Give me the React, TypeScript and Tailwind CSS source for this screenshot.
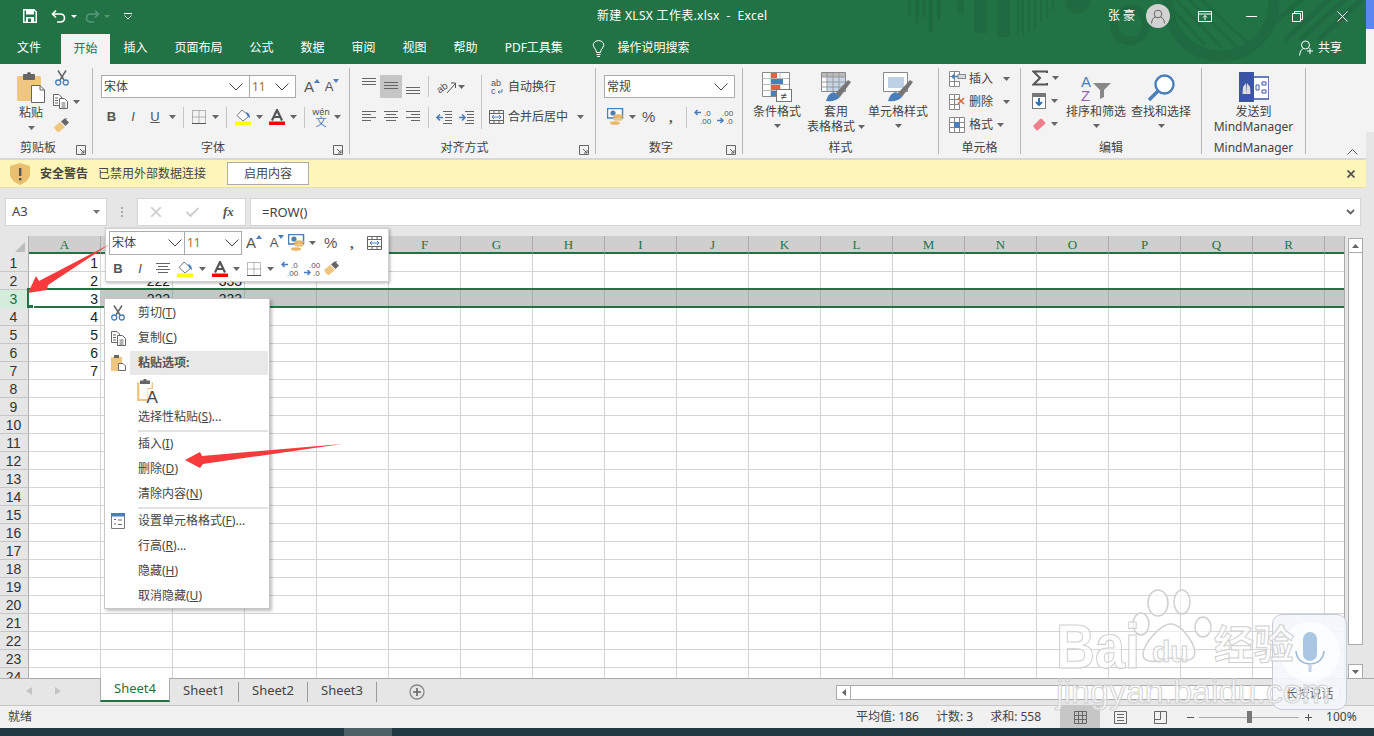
import React from "react";

type P = { children?: React.ReactNode; className?: string };
const S = ({ w, h, children, className }: { w: number; h: number } & P) => (
  <svg width={w} height={h} viewBox={`0 0 ${w} ${h}`} className={"shrink-0 " + (className ?? "")}>{children}</svg>
);

const Caret = ({ className }: P) => (
  <S w={7} h={4} className={className}><polygon points="0,0 7,0 3.5,4" fill="#666" /></S>
);
const Chevron = () => (
  <S w={14} h={8}><polyline points="0.5,0.5 7,7 13.5,0.5" fill="none" stroke="#444" strokeWidth="1" /></S>
);
const Launcher = () => (
  <S w={10} h={10}><path d="M.5.5H9.5V9.5H.5Z M4 4L8 8 M8 5V8H5" fill="none" stroke="#666" strokeWidth="1" /></S>
);
const Lines = ({ ys, x1, x2 }: { ys: number[]; x1: number[]; x2: number[] }) => (
  <>{ys.map((y, i) => <line key={i} x1={x1[i]} x2={x2[i]} y1={y + .5} y2={y + .5} stroke="#666" />)}</>
);

const PasteBig = () => (
  <S w={28} h={31}>
    <rect x="0" y="4" width="24" height="25" rx="1.5" fill="#efc67f" />
    <rect x="6" y="2" width="12" height="6" rx="1" fill="#666" /><rect x="10" y="0" width="4" height="4" rx="2" fill="#666" />
    <path d="M14.5 13.5H23L27.5 18V30.5H14.5Z" fill="#fff" stroke="#666" />
    <path d="M23 13.5V18H27.5" fill="none" stroke="#666" />
  </S>
);
const Scissors = () => (
  <svg width={14} height={16} viewBox="0 0 14 16" className="shrink-0">
    <path d="M3 .5L9 10 M11 .5L5 10" stroke="#666" strokeWidth="1.5" fill="none" />
    <circle cx="3.2" cy="12.5" r="2.5" fill="none" stroke="#4a7ebb" strokeWidth="1.3" />
    <circle cx="10.8" cy="12.5" r="2.5" fill="none" stroke="#4a7ebb" strokeWidth="1.3" />
  </svg>
);
const CopyIc = () => (
  <S w={15} h={15}>
    <path d="M.5.5H6L8.5 3V11.5H.5Z" fill="#fff" stroke="#666" />
    <path d="M6.5 4.5H11.5L14.5 7.5V14.5H6.5Z" fill="#fff" stroke="#666" />
    <path d="M2 4H5 M2 6.5H5 M2 9H5 M8.5 9H12.5 M8.5 11H12.5 M8.5 13H12.5" stroke="#666" />
  </S>
);
const Brush = () => (
  <S w={17} h={15}>
    <path d="M1 9L7 4L12 9L6 14Q3 14 1 9Z" fill="#efc67f" />
    <path d="M8 3.5L12.5 8L16 4.5L13 1.5L15 .5L11.5.5Z" fill="#666" />
  </S>
);
const Fill = ({ w = 16 }: { w?: number }) => (
  <S w={w} h={16}>
    <path d="M7 1L14 7L8 12L2 6.5Z" fill="#fff" stroke="#777" />
    <path d="M11 3Q15 4 15 9Q12 8 11 3Z" fill="#4a7ebb" />
    <rect x="0" y="12.5" width={w} height="3.5" fill="#ff0" />
  </S>
);
const FontA = () => (
  <S w={16} h={16}>
    <path d="M3 11.5L8 1L13 11.5 M5 8H11" fill="none" stroke="#555" strokeWidth="2.2" />
    <rect x="0" y="12.5" width="16" height="3.5" fill="#f00" />
  </S>
);
const BorderIc = () => (
  <S w={14} h={14}>
    <path d="M.5.5H13.5V13.5H.5Z M7 .5V13.5 M.5 7H13.5" fill="none" stroke="#777" strokeDasharray="1 1" />
    <path d="M0 13.5H14" stroke="#555" />
  </S>
);
const Grow = ({ up = true }: { up?: boolean }) => (
  <span className="relative flex w-[16px] justify-center text-[#555]">
    <span className={(up ? "text-[15px]" : "text-[13px]") + " leading-[18px] font-['Liberation_Sans',sans-serif]"}>A</span>
    <S w={6} h={4} className="mt-[1px]"><polygon points={up ? "0,4 6,4 3,0" : "0,0 6,0 3,4"} fill="#4a7ebb" /></S>
  </span>
);
const Currency = () => (
  <S w={17} h={18}>
    <rect x="0.5" y="0.5" width="15" height="9.5" fill="#fff" stroke="#4a7ebb" strokeWidth="1.5" />
    <circle cx="6" cy="5" r="2.6" fill="#4a7ebb" />
    <ellipse cx="11" cy="8" rx="5" ry="1.8" fill="#e9b765" /><ellipse cx="11" cy="11" rx="5" ry="1.8" fill="#efc67f" />
    <ellipse cx="8" cy="15" rx="5" ry="1.8" fill="#e9b765" />
  </S>
);
const Dec = ({ inc }: { inc?: boolean }) => (
  <S w={18} h={16}>
    {inc ? <path d="M7 3.5H1 M3.5 1L1 3.5L3.5 6" stroke="#4a7ebb" strokeWidth="1.5" fill="none" /> : <path d="M1 11.5H7 M4.5 9L7 11.5L4.5 14" stroke="#4a7ebb" strokeWidth="1.5" fill="none" />}
    <text x={inc ? 10 : 6} y="6.5" fontSize="8" fill="#555" fontFamily="Liberation Sans">{inc ? ".0" : ".00"}</text>
    <text x={inc ? 6 : 10} y="15" fontSize="8" fill="#555" fontFamily="Liberation Sans">{inc ? ".00" : ".0"}</text>
  </S>
);
const Merge = () => (
  <S w={15} h={14}>
    <path d="M.5.5H14.5V13.5H.5Z M.5 3.5H14.5 M.5 10.5H14.5 M5 .5V3.5 M10 .5V3.5 M5 10.5V13.5 M10 10.5V13.5" fill="none" stroke="#666" />
    <path d="M3 7H12 M5 5L3 7L5 9 M10 5L12 7L10 9" fill="none" stroke="#4a7ebb" />
  </S>
);
const AlignLines = ({ kind }: { kind: "l" | "c" | "r" | "m" }) => {
  const x1 = kind === "l" ? [0, 0, 0, 0] : kind === "r" ? [0, 5, 0, 5] : [0, 2, 0, 2];
  const x2 = kind === "l" ? [14, 9, 14, 9] : kind === "r" ? [14, 14, 14, 14] : [14, 12, 14, 12];
  return <S w={14} h={12}><Lines ys={[0, 3, 6, 9]} x1={x1} x2={x2} /></S>;
};
const Vert = ({ y }: { y: number }) => (
  <S w={14} h={18}><Lines ys={[y, y + 3, y + 6]} x1={[0, 0, 0]} x2={[14, 14, 14]} /></S>
);
const Sep = ({ className }: P) => <div className={"w-px h-[21px] bg-[#c6c6c6] shrink-0 " + (className ?? "")} />;

const CondIc = () => (
  <S w={30} h={30}>
    <path d="M.5.5H27.5V24.5H.5Z" fill="#fff" stroke="#888" />
    <path d="M9 .5V24 M18 .5V24 M.5 6.5H27 M.5 12.5H27 M.5 18.5H27" stroke="#bbb" />
    <rect x="9" y="1" width="6" height="5" fill="#d9663f" /><rect x="9" y="7" width="12" height="5" fill="#4a7ebb" />
    <rect x="9" y="13" width="9" height="5" fill="#d9663f" /><rect x="9" y="19" width="5" height="5" fill="#4a7ebb" />
    <rect x="14.5" y="17.5" width="15" height="12" fill="#fff" stroke="#777" />
    <text x="18.5" y="27.5" fontSize="11" fill="#444" fontFamily="Liberation Sans">≠</text>
  </S>
);
const TableIc = ({ full }: { full: boolean }) => (
  <S w={30} h={30}>
    <path d="M.5.5H24.5V19.5H.5Z" fill="#fff" stroke="#888" />
    {full ? (
      <><rect x="1" y="1" width="23" height="4" fill="#bbb" /><rect x="6" y="5" width="18" height="14" fill="#c5d6e8" /><path d="M6 1V19 M12 1V19 M18 1V19 M1 5H24 M1 10H24 M1 15H24" stroke="#999" /></>
    ) : <rect x="5" y="5" width="16" height="11" fill="#bdd1e6" />}
    <path d="M14 22L27 8L30 10L19 25Z" fill="#777" />
    <path d="M5 29Q7 21 13 20L19 25Q15 30 5 29Z" fill="#4a7ebb" />
  </S>
);
const CellIc = ({ kind }: { kind: "i" | "d" | "f" }) => (
  <S w={17} h={16}>
    <path d="M.5.5H5.5V5.5H.5Z M5.5.5H10.5V5.5H5.5Z M.5 5.5H5.5V10.5H.5Z M.5 10.5H5.5V15.5H.5Z M5.5 10.5H10.5V15.5H5.5Z" fill="#fff" stroke="#888" />
    {kind === "i" && <><rect x="9" y="3.5" width="7.5" height="4" fill="#d6dce4" stroke="#888" /><path d="M9 5.5H3 M5 3.5L3 5.5L5 7.5" stroke="#4a7ebb" strokeWidth="1.3" fill="none" /></>}
    {kind === "d" && <path d="M9 4L15 10 M15 4L9 10" stroke="#d9663f" strokeWidth="1.6" />}
    {kind === "f" && <><path d="M.5.5H15.5V15.5H.5Z M.5 5.5H15.5 M.5 10.5H15.5 M5.5.5V15.5 M10.5.5V15.5" fill="#fff" stroke="#888" /><rect x="5" y="5" width="6" height="6" fill="#4a7ebb" /></>}
  </S>
);

const Group = ({ className, label, launcher, children }: { label: string; launcher?: boolean } & P) => (
  <div className={"flex shrink-0 " + (className ?? "")}>
    <div className="flex flex-col flex-1 min-w-0">
      <div className="h-[72px]">{children}</div>
      <div className="flex h-[22px] items-start">
        <div className="flex-1 text-center text-[12px] leading-[18px] pt-[3px] text-[#444] whitespace-nowrap">{label}</div>
        {launcher ? <div className="w-[16px] pt-[9px]"><Launcher /></div> : null}
      </div>
    </div>
    <div className="w-px bg-[#b8b8b8] my-[4px]" />
  </div>
);

const Combo = ({ text, className, textClass }: { text: string; textClass?: string } & P) => (
  <div className={"flex items-center justify-between bg-white border border-[#ababab] pl-[2px] pr-[6px] text-[12px] text-[#444] shrink-0 " + (className ?? "")}>
    <span className={textClass}>{text}</span><Chevron />
  </div>
);

const BIU = ({ t, className }: { t: string } & P) => (
  <span className={"flex justify-center text-[13px] text-[#555] font-['Liberation_Sans',sans-serif] " + (className ?? "")}>{t}</span>
);

const Big = ({ icon, lines, className, caretTop = true }: { icon: React.ReactNode; lines: React.ReactNode[]; caretTop?: boolean } & P) => (
  <div className={"flex flex-col items-center shrink-0 " + (className ?? "")}>
    <div className="h-[33px] flex items-end">{icon}</div>
    <div className="text-[12px] leading-[15px] text-[#444] mt-[2px] text-center whitespace-nowrap">
      {lines.map((l, i) => <div key={i}>{l}</div>)}
    </div>
    {caretTop ? <Caret className="mt-[5px]" /> : null}
  </div>
);

const Ribbon = () => (
  <div className="flex h-[94px] w-[1366px] bg-[#f3f3f3] shrink-0">
    <Group className="w-[93px]" label="剪贴板" launcher>
      <div className="flex pt-[8px] pl-[17px]">
        <div className="flex flex-col w-[28px] items-center">
          <PasteBig />
          <div className="text-[12px] leading-[16px] text-[#444] mt-[2px] whitespace-nowrap">粘贴</div>
          <Caret className="mt-[5px]" />
        </div>
        <div className="flex flex-col ml-[8px]">
          <div className="h-[24px] pl-[2px] -mt-[2px]"><Scissors /></div>
          <div className="flex h-[24px] items-start"><CopyIc /><Caret className="ml-[5px] mt-[6px]" /></div>
          <div className="h-[16px]"><Brush /></div>
        </div>
      </div>
    </Group>

    <Group className="w-[257px]" label="字体" launcher>
      <div className="pt-[11px] pl-[8px]">
        <div className="flex items-center h-[23px]">
          <Combo text="宋体" className="w-[149px] h-[23px]" />
          <Combo text="11" className="w-[47px] h-[23px] -ml-px" textClass="text-[#b0682c] font-['Noto_Sans',sans-serif]" />
          <div className="ml-[8px]"><Grow /></div>
          <div className="ml-[4px]"><Grow up={false} /></div>
        </div>
        <div className="flex items-center h-[22px] mt-[8px]">
          <BIU t="B" className="w-[21px] font-bold" />
          <BIU t="I" className="w-[22px] italic" />
          <BIU t="U" className="w-[22px] underline" />
          <Caret className="ml-[3px]" />
          <Sep className="ml-[7px]" />
          <div className="ml-[8px]"><BorderIc /></div>
          <Caret className="ml-[6px]" />
          <Sep className="ml-[7px]" />
          <div className="ml-[8px]"><Fill /></div>
          <Caret className="ml-[5px]" />
          <div className="ml-[6px]"><FontA /></div>
          <Caret className="ml-[5px]" />
          <Sep className="ml-[7px]" />
          <div className="ml-[8px] flex flex-col items-center w-[16px] leading-[10px] text-[9px] text-[#555]">
            <span>wén</span><span className="text-[#4a7ebb] text-[11px]">文</span>
          </div>
          <Caret className="ml-[5px]" />
        </div>
      </div>
    </Group>

    <Group className="w-[246px]" label="对齐方式" launcher>
      <div className="pt-[11px] pl-[12px] flex">
        <div className="flex flex-col">
          <div className="flex items-center h-[23px]">
            <div className="w-[14px]"><Vert y={0} /></div>
            <div className="w-[22px] h-[23px] ml-[4px] bg-[#c6c6c6] flex items-center justify-center"><Vert y={4} /></div>
            <div className="ml-[4px]"><Vert y={9} /></div>
            <Sep className="ml-[8px]" />
            <S w={21} h={18} className="ml-[7px]">
              <text x="0" y="13" fontSize="10" fill="#555" fontFamily="Liberation Sans" transform="rotate(-35 6 9)">ab</text>
              <path d="M11 15L19 6 M15 5H19.5V10" stroke="#555" fill="none" />
            </S>
            <Caret className="ml-[1px]" />
          </div>
          <div className="flex items-center h-[22px] mt-[8px]">
            <AlignLines kind="l" /><div className="ml-[8px]"><AlignLines kind="c" /></div><div className="ml-[8px]"><AlignLines kind="r" /></div>
            <Sep className="ml-[8px]" />
            <S w={16} h={13} className="ml-[7px]"><path d="M7 .5H16 M9 3.5H16 M9 6.5H16 M9 9.5H16 M7 12.5H16" stroke="#666" /><path d="M7 6.5H1 M4 3.5L1 6.5L4 9.5" stroke="#4a7ebb" strokeWidth="1.6" fill="none" /></S>
            <S w={16} h={13} className="ml-[6px]"><path d="M7 .5H16 M9 3.5H16 M9 6.5H16 M9 9.5H16 M7 12.5H16" stroke="#666" /><path d="M1 6.5H7 M4 3.5L7 6.5L4 9.5" stroke="#4a7ebb" strokeWidth="1.6" fill="none" /></S>
          </div>
        </div>
        <Sep className="ml-[7px] !h-[54px]" />
        <div className="flex flex-col ml-[7px]">
          <div className="flex items-center h-[23px] pl-[2px] text-[12px] text-[#444]">
            <S w={13} h={16}><text x="0" y="7" fontSize="9" fill="#555" fontFamily="Liberation Sans">ab</text><text x="0" y="15" fontSize="9" fill="#555" fontFamily="Liberation Sans">c</text><path d="M11 10V13H7 M8.5 11.5L7 13L8.5 14.5" stroke="#4a7ebb" fill="none" /></S>
            <span className="ml-[4px] whitespace-nowrap">自动换行</span>
          </div>
          <div className="flex items-center h-[22px] mt-[8px] text-[12px] text-[#444]">
            <Merge />
            <span className="ml-[4px] whitespace-nowrap">合并后居中</span>
            <Caret className="ml-[9px]" />
          </div>
        </div>
      </div>
    </Group>

    <Group className="w-[147px]" label="数字" launcher>
      <div className="pt-[11px] pl-[8px]">
        <Combo text="常规" className="w-[131px] h-[23px]" />
        <div className="flex items-center h-[22px] mt-[8px] pl-[3px]">
          <Currency />
          <Caret className="ml-[5px]" />
          <span className="ml-[6px] w-[14px] text-[15px] text-[#555] font-['Liberation_Sans',sans-serif]">%</span>
          <span className="ml-[13px] w-[6px] text-[15px] font-bold text-[#555] font-['Liberation_Serif',serif]">,</span>
          <Sep className="ml-[11px]" />
          <div className="ml-[7px]"><Dec inc /></div>
          <div className="ml-[4px]"><Dec /></div>
        </div>
      </div>
    </Group>

    <Group className="w-[196px]" label="样式">
      <div className="flex pt-[5px]">
        <Big className="w-[68px]" icon={<CondIc />} lines={["条件格式"]} />
        <Big className="w-[50px]" icon={<TableIc full />} lines={[<span className="block">套用</span>, <span className="inline-flex items-center">表格格式 <Caret className="ml-[3px]" /></span>]} caretTop={false} />
        <Big className="w-[74px]" icon={<TableIc full={false} />} lines={["单元格样式"]} />
      </div>
    </Group>

    <Group className="w-[82px]" label="单元格">
      <div className="flex flex-col pt-[7px] pl-[10px] text-[12px] text-[#444] gap-[7px]">
        <div className="flex items-center h-[16px]"><CellIc kind="i" /><span className="ml-[3px] whitespace-nowrap">插入</span><Caret className="ml-[10px]" /></div>
        <div className="flex items-center h-[16px]"><CellIc kind="d" /><span className="ml-[3px] whitespace-nowrap">删除</span><Caret className="ml-[10px]" /></div>
        <div className="flex items-center h-[16px]"><CellIc kind="f" /><span className="ml-[3px] whitespace-nowrap">格式</span><Caret className="ml-[4px]" /></div>
      </div>
    </Group>

    <Group className="w-[181px]" label="编辑">
      <div className="flex">
        <div className="flex flex-col pl-[11px] pt-[6px] w-[44px] gap-[7px]">
          <div className="flex items-center h-[16px]"><S w={16} h={16}><path d="M15 3V1.5H1.5L8 8L1.5 14.5H15V13" fill="none" stroke="#555" strokeWidth="2" /></S><Caret className="ml-[4px]" /></div>
          <div className="flex items-center h-[16px]"><S w={14} h={16}><rect x=".5" y=".5" width="13" height="15" fill="#fff" stroke="#777" /><rect x="0" y="0" width="14" height="4" fill="#777" /><path d="M7 5V12 M4 9L7 12L10 9" stroke="#2e75b6" strokeWidth="2" fill="none" /></S><Caret className="ml-[5px]" /></div>
          <div className="flex items-center h-[16px]"><S w={14} h={14}><path d="M1 9L8 2Q9 1 10 2L13 5Q14 6 13 7L6 13Q5 14 4 13Z" fill="#ee7f8b" /></S><Caret className="ml-[5px]" /></div>
        </div>
        <Big className="w-[60px] ml-[1px] pt-[5px]" icon={
          <S w={30} h={28}>
            <text x="0" y="13" fontSize="15" fill="#4a7ebb" fontFamily="Liberation Sans">A</text>
            <text x="0" y="27" fontSize="15" fill="#9a5fb4" fontFamily="Liberation Sans">Z</text>
            <path d="M12 9H30L23 16V23L19 25V16Z" fill="#888" />
          </S>} lines={["排序和筛选"]} />
        <Big className="w-[60px] ml-[5px] pt-[5px]" icon={
          <S w={28} h={28}>
            <circle cx="17.5" cy="10.5" r="9" fill="#fff" stroke="#4a7ebb" strokeWidth="2.4" />
            <path d="M11 17L2 26" stroke="#4a7ebb" strokeWidth="3.5" />
          </S>} lines={["查找和选择"]} />
      </div>
    </Group>

    <Group className="w-[104px]" label="MindManager">
      <div className="flex pt-[5px] justify-center">
        <Big icon={
          <S w={30} h={30}>
            <rect x="10" y="5" width="20" height="22" fill="#fff" stroke="#3b55a5" strokeWidth="1.5" />
            <rect x="0" y="0" width="15" height="30" fill="#3b55a5" />
            <path d="M4 15L7 11L7.5 22H3.5Z M11 15L8 11L7.5 22H11.5Z" fill="#ddd" />
            <path d="M17 13H20V18H17Z M23 10H27V13H23Z M23 18H27V21H23Z" fill="none" stroke="#3b55a5" />
          </S>} lines={["发送到", "MindManager"]} caretTop={false} />
      </div>
    </Group>
    <div className="flex-1 flex items-end justify-end pr-[8px] pb-[3px]">
      <S w={11} h={6}><polyline points=".5,5.5 5.5,.5 10.5,5.5" fill="none" stroke="#666" /></S>
    </div>
  </div>
);

const TitlePattern = () => (
  <svg width="1366" height="64" viewBox="0 0 1366 64" className="absolute left-0 top-0">
    <g fill="#1f6a41">
      {[[908, 3, 16], [915, 4, 23], [922, 4, 17], [929, 4, 32], [937, 4, 20], [957, 7, 13], [974, 13, 33], [997, 13, 37], [1017, 2, 35], [1022, 2, 35], [1028, 2, 32], [1034, 2, 28], [1040, 2, 23], [1046, 2, 18], [1052, 2, 10]].map(([x, w, h], i) => (
        <rect key={i} x={x} y="0" width={w} height={h} />
      ))}
      <circle cx="1078" cy="0" r="13" />
    </g>
    <g fill="none" stroke="#1f6a41">
      <circle cx="1130" cy="25" r="16" strokeWidth="8" />
      <circle cx="1221" cy="3" r="53" strokeWidth="11" />
      <path d="M1160 -5L1205 45 M1172 -5L1222 48 M1184 -5L1240 50 M1196 -5L1250 45" strokeWidth="3" />
      <path d="M1285 40L1340 -10 M1300 40L1355 -10 M1318 40L1372 -10 M1272 25L1312 -10" strokeWidth="5" />
    </g>
  </svg>
);

const Header = () => (
  <div className="relative w-[1366px] h-[64px] bg-[#217346] shrink-0 overflow-hidden text-white">
    <TitlePattern />
    <div className="relative flex items-center h-[32px]">
      <S w={14} h={14} className="ml-[23px]">
        <path d="M.75.75H11L13.25 3V13.25H.75Z" fill="none" stroke="#fff" strokeWidth="1.5" />
        <rect x="3" y="1" width="8" height="4.5" fill="#fff" /><rect x="3" y="8" width="8" height="5" fill="#fff" /><rect x="5" y="9.5" width="3" height="3.5" fill="#217346" />
      </S>
      <S w={15} h={14} className="ml-[14px]"><path d="M5 1.5L1.5 5L5 8.5 M1.5 5H9Q13.5 5 13.5 9Q13.5 13 9 13H6" fill="none" stroke="#fff" strokeWidth="1.6" /></S>
      <S w={6} h={3} className="ml-[5px]"><polygon points="0,0 6,0 3,3" fill="#fff" /></S>
      <S w={15} h={14} className="ml-[8px]"><path d="M10 1.5L13.5 5L10 8.5 M13.5 5H6Q1.5 5 1.5 9Q1.5 13 6 13H9" fill="none" stroke="#58957a" strokeWidth="1.6" /></S>
      <S w={6} h={3} className="ml-[4px]"><polygon points="0,0 6,0 3,3" fill="#58957a" /></S>
      <S w={8} h={7} className="ml-[14px]"><path d="M0 .5H8" stroke="#fff" /><polyline points=".5,2.5 4,6 7.5,2.5" fill="none" stroke="#fff" /></S>
      <div className="absolute left-[597px] top-0 h-[32px] flex items-center text-[12px] whitespace-pre tracking-[0.3px]">新建 XLSX 工作表.xlsx  -  Excel</div>
      <div className="ml-auto flex items-center">
        <span className="text-[12px] whitespace-pre">张 豪</span>
        <div className="ml-[11px] w-[24px] h-[24px] rounded-full bg-[#d2d2d2] flex items-center justify-center">
          <S w={14} h={15}><circle cx="7" cy="5" r="3.8" fill="none" stroke="#666" /><path d="M.5 14.5Q1 9 4.5 8 M13.5 14.5Q13 9 9.5 8" fill="none" stroke="#666" /></S>
        </div>
        <S w={14} h={11} className="ml-[28px]"><path d="M.5.5H13.5V10.5H.5Z M.5 3H13.5 M7 9V4.5 M5 6.5L7 4.5L9 6.5" fill="none" stroke="#fff" /></S>
        <S w={11} h={1} className="ml-[34px]"><rect width="11" height="1" fill="#fff" /></S>
        <S w={11} h={11} className="ml-[35px]"><path d="M.5 2.5H8.5V10.5H.5Z M2.5 2.5V.5H10.5V8.5H8.5" fill="none" stroke="#fff" /></S>
        <S w={11} h={11} className="ml-[34px] mr-[18px]"><path d="M.5.5L10.5 10.5 M10.5.5L.5 10.5" stroke="#fff" strokeWidth="1" /></S>
      </div>
    </div>
    <div className="relative flex h-[32px] text-[12px] pl-[4px]">
      <span className="px-[13px] flex items-center">文件</span>
      <span className="ml-[7px] w-[49px] mt-[2px] bg-[#f3f3f3] text-[#217346] flex items-center justify-center">开始</span>
      <span className="px-[13.5px] flex items-center">插入</span>
      <span className="px-[13.5px] flex items-center">页面布局</span>
      <span className="px-[13.5px] flex items-center">公式</span>
      <span className="px-[13.5px] flex items-center">数据</span>
      <span className="px-[13.5px] flex items-center">审阅</span>
      <span className="px-[13.5px] flex items-center">视图</span>
      <span className="px-[13.5px] flex items-center">帮助</span>
      <span className="px-[13.5px] flex items-center whitespace-nowrap">PDF工具集</span>
      <span className="ml-[16px] flex items-center">
        <S w={13} h={17}><path d="M4.5 12.5Q4.5 10 2.5 8Q.5 5.5 1.5 3.5Q3 .5 6.5.5Q10 .5 11.5 3.5Q12.5 5.5 10.5 8Q8.5 10 8.5 12.5Z M4.5 14.5H8.5 M5 16.5H8" fill="none" stroke="#fff" /></S>
        <span className="ml-[12px] whitespace-nowrap">操作说明搜索</span>
      </span>
      <span className="ml-auto mr-[24px] flex items-center">
        <S w={14} h={16}><circle cx="6.5" cy="5" r="4" fill="none" stroke="#fff" /><path d="M.5 15.5Q1 10 4 8.5 M8 11H14 M11 8V14" fill="none" stroke="#fff" /></S>
        <span className="ml-[5px] whitespace-nowrap">共享</span>
      </span>
    </div>
  </div>
);

const SecurityBar = () => (
  <div className="flex items-center w-[1366px] h-[30px] bg-[#fdf6b8] border-t-2 border-t-[#d8d8d8] border-b border-b-[#e6e0b0] text-[12px] text-[#444] shrink-0">
    <S w={20} h={22} className="ml-[10px]">
      <path d="M10 0L20 3V12Q19 18 10 22Q1 18 0 12V3Z" fill="#e9bf6f" />
      <rect x="9" y="5" width="2.4" height="8" fill="#555" /><rect x="9" y="15" width="2.4" height="2.4" fill="#555" />
    </S>
    <span className="ml-[10px] font-bold whitespace-nowrap">安全警告</span>
    <span className="ml-[10px] whitespace-nowrap">已禁用外部数据连接</span>
    <div className="ml-[21px] w-[82px] h-[23px] bg-white border border-[#ababab] flex items-center justify-center">启用内容</div>
    <S w={8} h={8} className="ml-auto mr-[11px]"><path d="M.5.5L7.5 7.5 M7.5.5L.5 7.5" stroke="#555" strokeWidth="1.8" /></S>
  </div>
);

const FormulaBar = () => (
  <div className="flex items-start h-[48px] pt-[10px] pl-[5px] shrink-0">
    <div className="flex items-center justify-between w-[102px] h-[28px] bg-white border border-[#d4d4d4] pl-[6px] pr-[6px] text-[13px] text-[#444] font-['Noto_Sans',sans-serif]">
      A3<S w={7} h={4}><polygon points="0,0 7,0 3.5,4" fill="#777" /></S>
    </div>
    <div className="w-[30px] flex flex-col items-center gap-[2px] pt-[9px]">
      <i className="w-[2px] h-[2px] bg-[#aaa]" /><i className="w-[2px] h-[2px] bg-[#aaa]" /><i className="w-[2px] h-[2px] bg-[#aaa]" />
    </div>
    <div className="flex items-center w-[109px] h-[28px] bg-white border border-[#d4d4d4]">
      <S w={10} h={10} className="ml-[13px]"><path d="M0 0L10 10 M10 0L0 10" stroke="#ccc" strokeWidth="1.6" /></S>
      <S w={13} h={10} className="ml-[25px]"><path d="M.5 5L4.5 9L12.5 1" fill="none" stroke="#ccc" strokeWidth="1.9" /></S>
      <span className="ml-[24px] text-[13px] italic font-bold text-[#555] font-['Liberation_Serif',serif]">fx</span>
    </div>
    <div className="ml-[4px] flex items-center justify-between w-[1111px] h-[28px] bg-white border border-[#d4d4d4] pl-[11px] pr-[4px] text-[13px] text-[#444] font-['Noto_Sans',sans-serif]">
      <span className="pt-[1px]">=ROW()</span><S w={9} h={6} className="mr-[1px]"><polyline points="1,1 4.5,4.5 8,1" fill="none" stroke="#666" strokeWidth="1.8" /></S>
    </div>
  </div>
);

const COLS = "ABCDEFGHIJKLMNOPQR".split("");
const ROWS = Array.from({ length: 24 }, (_, i) => i + 1);
const VALUES: Record<number, string[]> = { 1: ["1"], 2: ["2", "222", "333"], 3: ["3", "222", "333"], 4: ["4"], 5: ["5"], 6: ["6"], 7: ["7"] };

const Row = ({ n }: { n: number }) => {
  const sel = n === 3;
  return (
    <div className="relative flex h-[18px] shrink-0">
      <div className={"w-[29px] shrink-0 border-r border-r-[#ababab] border-b flex items-end justify-center pb-[1px] pr-[1px] text-[14px] leading-none font-['Liberation_Sans',sans-serif] " + (sel ? "bg-[#d3ecdb] text-[#217346] border-b-[#d3ecdb]" : "bg-[#e6e6e6] text-[#333] border-b-[#c6c6c6]")}>{n}</div>
      {COLS.map((c, i) => (
        <div key={c} className={"w-[72px] shrink-0 border-r border-b flex items-end justify-end pr-[2px] pb-[1px] text-[14px] leading-none text-[#222] font-['Liberation_Sans',sans-serif] " + (sel && i > 0 ? "bg-[#c6c6c6] border-r-[#ababab] border-b-white" : sel ? "bg-white border-r-[#c6c6c6] border-b-white" : "bg-white border-r-[#d4d4d4] border-b-[#d4d4d4]")}>
          {VALUES[n]?.[i] ?? ""}
        </div>
      ))}
      <div className={"w-[19px] shrink-0 border-b " + (sel ? "bg-[#c6c6c6] border-b-white" : "bg-white border-b-[#d4d4d4]")} />
      {sel ? (
        <>
          <div className="absolute left-[28px] top-[-2px] w-[1316px] h-[2px] bg-[#217346]" />
          <div className="absolute left-[28px] bottom-[0px] w-[1316px] h-[2px] bg-[#217346]" />
          <div className="absolute left-[27px] top-[-2px] w-[2px] h-[20px] bg-[#217346]" />
          <div className="absolute left-[28px] bottom-[-2px] w-[6px] h-[5px] bg-[#217346] border-r border-white" />
        </>
      ) : null}
    </div>
  );
};

const VScroll = () => (
  <div className="flex flex-col w-[29px] h-full items-start shrink-0 pl-[3px] pt-[2px] bg-[#e6e6e6]">
    <div className="w-[15px] h-[15px] bg-white border border-[#ababab] flex items-center justify-center">
      <S w={7} h={4}><polygon points="0,4 7,4 3.5,0" fill="#666" /></S>
    </div>
    <div className="w-[15px] h-[392px] bg-white border-x border-b border-[#ababab]" />
    <div className="w-[15px] flex-1" />
    <div className="w-[15px] h-[15px] bg-white border border-[#ababab] flex items-center justify-center mb-[-1px]">
      <S w={7} h={4}><polygon points="0,0 7,0 3.5,4" fill="#666" /></S>
    </div>
  </div>
);

const Grid = () => (
  <div className="flex h-[442px] shrink-0 overflow-hidden">
    <div className="flex flex-col w-[1345px] shrink-0 overflow-hidden border-r border-r-[#ababab]">
      <div className="flex h-[18px] shrink-0">
        <div className="w-[29px] bg-[#e6e6e6] border-r border-r-[#ababab] flex items-end justify-end pr-[3px] pb-[2px]">
          <S w={10} h={10}><polygon points="10,0 10,10 0,10" fill="#bdbdbd" /></S>
        </div>
        {COLS.map((c) => (
          <div key={c} className="w-[72px] shrink-0 bg-[#cfcfcf] border-r border-r-[#ababab] border-b-2 border-b-[#217346] flex items-center justify-center text-[13px] leading-none text-[#217346] font-['Liberation_Serif',serif]">{c}</div>
        ))}
        <div className="w-[19px] bg-[#cfcfcf] border-b-2 border-b-[#217346]" />
      </div>
      {ROWS.map((n) => <Row key={n} n={n} />)}
    </div>
    <VScroll />
  </div>
);

const SheetTabs = () => (
  <div className="flex h-[28px] bg-[#e6e6e6] border-t border-t-[#ababab] border-b border-b-[#c6c6c6] shrink-0 text-[13px] text-[#444] font-['Noto_Sans',sans-serif]">
    <div className="flex items-center w-[100px] pl-[26px] pb-[2px]">
      <S w={6} h={8}><polygon points="6,0 6,8 0,4" fill="#c4c4c4" /></S>
      <S w={6} h={8} className="ml-[23px]"><polygon points="0,0 0,8 6,4" fill="#c4c4c4" /></S>
    </div>
    <div className="w-[70px] h-[24px] -mt-px bg-white border-x border-x-[#ababab] border-b-2 border-b-[#217346] text-[#217346] flex items-center justify-center">Sheet4</div>
    {["Sheet1", "Sheet2", "Sheet3"].map((s) => (
      <div key={s} className="w-[69px] h-[20px] mt-[3px] border-r border-r-[#999] flex items-center justify-center pb-[3px]">{s}</div>
    ))}
    <S w={16} h={16} className="ml-[32px] mt-[5px]"><circle cx="8" cy="8" r="7" fill="none" stroke="#888" strokeWidth="1.3" /><path d="M4 8H12 M8 4V12" stroke="#666" strokeWidth="1.6" /></S>
    <div className="ml-[411px] mt-[6px] flex h-[15px] w-[504px] bg-white border border-[#ababab]">
      <div className="w-[14px] h-full border-r border-r-[#ababab] flex items-center justify-center">
        <S w={4} h={7}><polygon points="4,0 4,7 0,3.5" fill="#666" /></S>
      </div>
    </div>
  </div>
);

const StatusBar = () => (
  <div className="flex items-center h-[22px] bg-[#f1f1f1] text-[12px] text-[#444] shrink-0 font-['Noto_Sans','Noto_Sans_CJK_SC',sans-serif]">
    <span className="ml-[8px] whitespace-nowrap">就绪</span>
    <span className="ml-[824px] whitespace-nowrap">平均值: 186</span>
    <span className="ml-[17px] whitespace-nowrap">计数: 3</span>
    <span className="ml-[17px] whitespace-nowrap">求和: 558</span>
    <div className="ml-[19px] w-[40px] h-[22px] bg-[#c6c6c6] flex items-center justify-center">
      <S w={13} h={13}><path d="M.5.5H12.5V12.5H.5Z M.5 4.5H12.5 M.5 8.5H12.5 M4.5.5V12.5 M8.5.5V12.5" fill="none" stroke="#666" /></S>
    </div>
    <S w={13} h={13} className="ml-[14px]"><path d="M.5.5H12.5V12.5H.5Z M3 3.5H10 M3 6.5H10 M3 9.5H10" fill="none" stroke="#666" /></S>
    <S w={13} h={13} className="ml-[27px]"><path d="M.5.5H12.5V12.5H.5Z M.5 8.5H6.5V.5" fill="none" stroke="#666" /></S>
    <S w={7} h={1} className="ml-[20px]"><rect width="7" height="1" fill="#555" /></S>
    <div className="ml-[5px] w-[100px] h-px bg-[#ababab] flex items-center pl-[48px]"><div className="w-[5px] h-[12px] bg-[#777]" /></div>
    <S w={7} h={7} className="ml-[6px]"><path d="M0 3.5H7 M3.5 0V7" stroke="#555" /></S>
    <span className="ml-[14px] whitespace-nowrap">100%</span>
  </div>
);

const ClipA = () => (
  <S w={24} h={24}>
    <path d="M1 3.5H17V10H12V22H1Z" fill="#efc67f" />
    <rect x="3.5" y="3" width="12" height="6" fill="#fff" /><rect x="3.5" y="6" width="8" height="14" fill="#fff" />
    <path d="M4 1.5H14V5H4Z M7.5 1.5V0H10.5V1.5Z" fill="#666" />
    <text x="10.5" y="23.5" fontSize="17" fill="#444" fontFamily="Liberation Sans">A</text>
  </S>
);

const Item = ({ icon, children }: { icon?: React.ReactNode } & P) => (
  <div className="flex items-center h-[25px] shrink-0">
    <div className="w-[26px] flex justify-center">{icon}</div>
    <span className="ml-[7px] whitespace-nowrap">{children}</span>
  </div>
);
const MenuSep = () => <div className="ml-[33px] mr-[1px] h-[2px] bg-[#e2e2e2] shrink-0" />;

const ContextMenu = () => (
  <div className="absolute left-[104px] top-[298px] w-[166px] h-[311px] bg-white border border-[#c6c6c6] shadow-[2px_2px_3px_rgba(0,0,0,0.25)] flex flex-col pt-[1.5px] text-[12px] text-[#444]">
    <Item icon={<Scissors />}>剪切(<u>T</u>)</Item>
    <Item icon={<CopyIc />}>复制(<u>C</u>)</Item>
    <div className="flex h-[24px] shrink-0">
      <div className="w-[25px] flex justify-center items-center pl-[1px]">
        <S w={15} h={16}><path d="M0 2H11V8H7V16H0Z" fill="#efc67f" /><rect x="3" y="0" width="5" height="3" fill="#666" /><path d="M7.5 8.5H12L14.5 11V15.5H7.5Z" fill="#fff" stroke="#666" /></S>
      </div>
      <div className="flex-1 mr-[1px] bg-[#e8e8e8] flex items-center pl-[8px] font-bold text-[#555]">粘贴选项:</div>
    </div>
    <div className="h-[30px] pl-[31px] pt-[4px] shrink-0"><ClipA /></div>
    <Item>选择性粘贴(<u>S</u>)...</Item>
    <MenuSep />
    <Item>插入(<u>I</u>)</Item>
    <Item>删除(<u>D</u>)</Item>
    <Item>清除内容(<u>N</u>)</Item>
    <MenuSep />
    <Item icon={
      <S w={14} h={16}><path d="M.5.5H13.5V15.5H.5Z" fill="#fff" stroke="#777" /><rect width="14" height="3.5" fill="#4a7ebb" /><path d="M3 6.5H5 M3 11H5 M7 7H11 M7 11.5H11" stroke="#666" /></S>
    }>设置单元格格式(<u>F</u>)...</Item>
    <Item>行高(<u>R</u>)...</Item>
    <Item>隐藏(<u>H</u>)</Item>
    <Item>取消隐藏(<u>U</u>)</Item>
  </div>
);

const MiniToolbar = () => (
  <div className="absolute left-[105px] top-[228px] w-[284px] h-[54px] bg-white border border-[#d0d0d0] shadow-[1px_1px_3px_rgba(0,0,0,0.3)] pt-[2px] pl-[3px]">
    <div className="flex items-center h-[24px]">
      <Combo text="宋体" className="w-[76px] h-[24px] !pr-[2px]" />
      <Combo text="11" className="w-[58px] h-[24px] -ml-px !pr-[2px]" textClass="text-[#b0682c] font-['Noto_Sans',sans-serif]" />
      <div className="ml-[4px]"><Grow /></div>
      <div className="ml-[7px]"><Grow up={false} /></div>
      <div className="ml-[3px]"><Currency /></div>
      <Caret className="ml-[4px]" />
      <span className="ml-[8px] w-[14px] text-[15px] text-[#555] font-['Liberation_Sans',sans-serif]">%</span>
      <span className="ml-[12px] w-[8px] text-[15px] font-bold text-[#555] font-['Liberation_Serif',serif]">,</span>
      <div className="ml-[9px]"><Merge /></div>
    </div>
    <div className="flex items-center h-[25px] mt-[1px]">
      <BIU t="B" className="w-[18px] font-bold" />
      <BIU t="I" className="w-[26px] italic" />
      <div className="ml-[3px]"><AlignLines kind="m" /></div>
      <div className="ml-[7px]"><Fill /></div>
      <Caret className="ml-[6px]" />
      <div className="ml-[6px]"><FontA /></div>
      <Caret className="ml-[5px]" />
      <div className="ml-[7px]"><BorderIc /></div>
      <Caret className="ml-[6px]" />
      <div className="ml-[7px]"><Dec inc /></div>
      <div className="ml-[4px]"><Dec /></div>
      <div className="ml-[2px]"><Brush /></div>
    </div>
  </div>
);

const Arrows = () => (
  <svg width="1374" height="736" viewBox="0 0 1374 736" className="absolute left-0 top-0 pointer-events-none">
    <polygon points="110,244 48,285 47,290 28,293 36,276 39,281" fill="#f83a3d" />
    <polygon points="342,444 203,464 200,468 185,460 200,452 202,456" fill="#f83a3d" />
  </svg>
);

const Watermark = () => (
  <div className="absolute left-[1056px] top-[588px] w-[290px] h-[116px] pointer-events-none text-white/60 [-webkit-text-stroke:1px_#d0d0d0]">
    <svg width="120" height="80" viewBox="0 0 120 80" className="absolute left-[38px] top-0">
      <g fill="rgba(255,255,255,.6)" stroke="#d0d0d0" strokeWidth="1.5">
        <ellipse cx="64" cy="15" rx="10" ry="13" /><ellipse cx="88" cy="14" rx="8" ry="12" /><ellipse cx="47" cy="36" rx="8" ry="11" /><ellipse cx="109" cy="39" rx="8" ry="10" />
        <path d="M78 36C90 38 104 60 100 68C96 76 86 70 78 70C68 70 58 78 50 70C44 62 66 34 78 36Z" />
      </g>
    </svg>
    <span className="absolute left-[0px] top-[28px] text-[54px] leading-[60px] font-bold scale-y-[1.15] font-['Liberation_Sans',sans-serif]">Bai</span>
    <span className="absolute left-[96px] top-[46px] text-[30px] leading-[36px] font-bold font-['Liberation_Sans',sans-serif]">du</span>
    <span className="absolute left-[158px] top-[32px] text-[40px] leading-[48px] font-bold">经验</span>
    <span className="absolute left-[0px] top-[86px] text-[34px] leading-[34px] whitespace-nowrap font-['Liberation_Sans',sans-serif]">jingyan.baidu.com</span>
  </div>
);

const Voice = () => (
  <div className="absolute left-[1272px] top-[614px] w-[75px] h-[96px] rounded-[10px] bg-[#f3f6fc]/90 border border-[#c5cbd8] flex flex-col items-center overflow-hidden">
    <div className="mt-[7px] w-[60px] h-[60px] rounded-full bg-white/70 flex items-center justify-center">
      <S w={30} h={40}>
        <rect x="8" y="0" width="14" height="29" rx="7" fill="#a9c6e2" />
        <path d="M1 19Q2 31 15 32Q28 31 29 19" fill="none" stroke="#9db9d6" strokeWidth="1.6" />
        <rect x="13.5" y="32" width="3" height="8" fill="#c2d3e6" />
      </S>
    </div>
    <div className="mt-[3px] text-[12px] text-[#666] whitespace-nowrap">长按说话</div>
  </div>
);

export default function App() {
  return (
    <div className="relative w-[1374px] h-[736px] overflow-hidden flex flex-col bg-[#e6e6e6] font-['Noto_Sans','Noto_Sans_CJK_SC',sans-serif]">
      <div className="flex h-[64px] shrink-0">
        <Header />
        <div className="flex-1 flex flex-col">
          <div className="h-[29px] bg-[#5b86f0]" />
          <div className="flex-1 bg-[#f3f3f3]" />
        </div>
      </div>
      <div className="flex h-[94px] shrink-0">
        <Ribbon />
        <div className="flex-1 flex flex-col">
          <div className="h-[68px] bg-[#f3f3f3]" />
          <div className="flex-1 bg-[#e6e6e6]" />
        </div>
      </div>
      <SecurityBar />
      <FormulaBar />
      <Grid />
      <SheetTabs />
      <StatusBar />
      <div className="flex-1 bg-[#1f3a42] flex">
        <div className="ml-[344px] w-[48px] bg-[#4d6065]" />
      </div>
      <MiniToolbar />
      <ContextMenu />
      <Arrows />
      <Voice />
      <Watermark />
    </div>
  );
}
